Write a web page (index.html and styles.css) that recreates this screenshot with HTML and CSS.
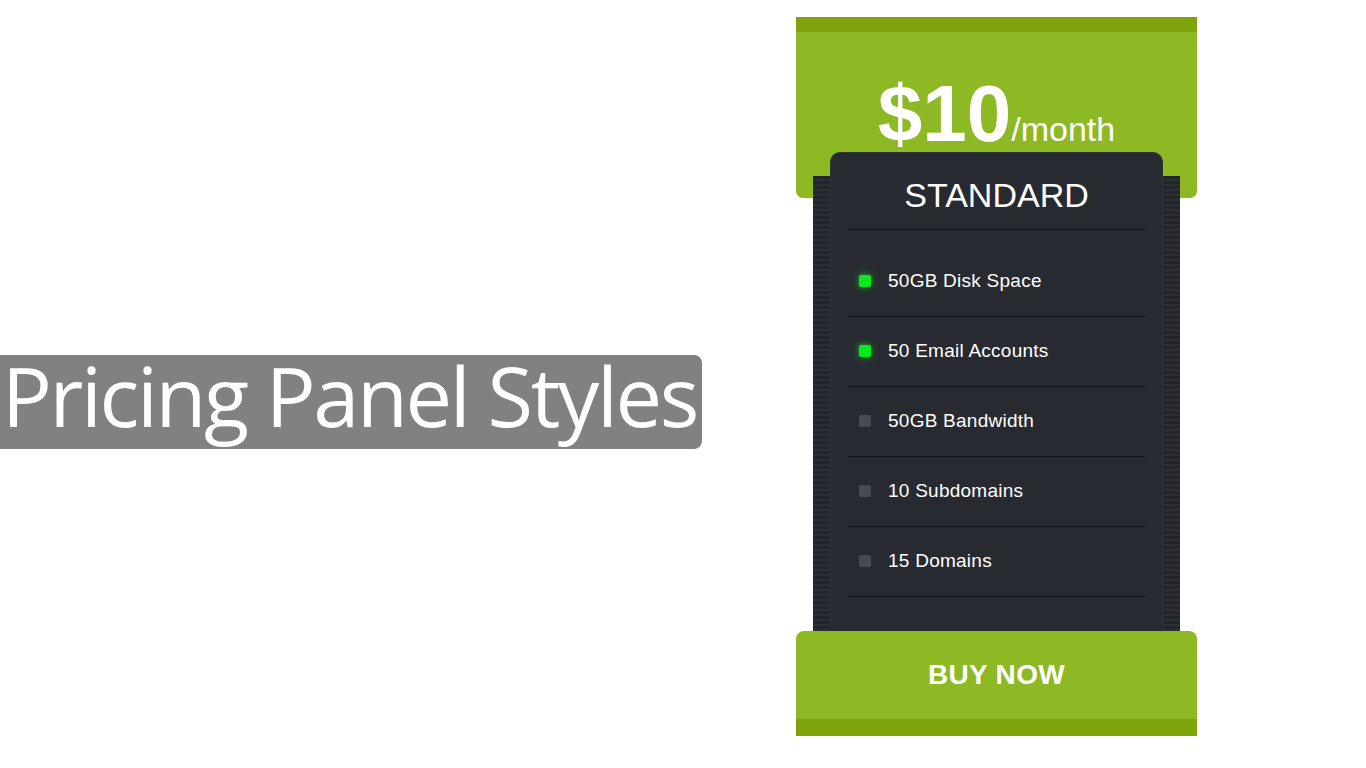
FILE: index.html
```html
<!DOCTYPE html>
<html>
<head>
<meta charset="utf-8">
<link rel="stylesheet" href="styles.css">
</head>
<body>
<div class="page">
  <div class="title-wrap">
    <h1 class="title"><span class="title-text">Pricing Panel Styles</span></h1>
  </div>
  <div class="panel">
    <div class="head">
      <div class="price"><span class="amount">$10</span><span class="per">/month</span></div>
    </div>
    <div class="body">
      <div class="card">
        <h2 class="plan">STANDARD</h2>
        <ul class="features">
          <li class="feature"><span class="dot on"></span>50GB Disk Space</li>
          <li class="feature"><span class="dot on"></span>50 Email Accounts</li>
          <li class="feature"><span class="dot"></span>50GB Bandwidth</li>
          <li class="feature"><span class="dot"></span>10 Subdomains</li>
          <li class="feature"><span class="dot"></span>15 Domains</li>
        </ul>
      </div>
    </div>
    <a class="buy" href="#">BUY NOW</a>
  </div>
</div>
</body>
</html>
```
FILE: styles.css
```css
* { box-sizing: border-box; }
html, body { margin: 0; padding: 0; background: #fff; }
body { width: 1366px; height: 768px; overflow: hidden; font-family: "Liberation Sans", Arial, sans-serif; }

.page { display: flex; align-items: flex-start; }

.title-wrap { width: 702px; margin-top: 355px; }
.title {
  margin: 0;
  height: 94px;
  width: 702px;
  background: #818181;
  border-radius: 0 8px 8px 0;
  color: #fff;
  font-family: "Open Sans", "Noto Sans", sans-serif;
  font-weight: 500;
  font-size: 83px;
  line-height: 80px;
  letter-spacing: -2.4px;
  padding-left: 2px;
  white-space: nowrap;
}

.panel { width: 401px; margin-left: 94px; margin-top: 17px; display: flex; flex-direction: column; }

.head {
  height: 181px;
  background: #8db924;
  border-top: 15px solid #7fa30a;
  border-radius: 0 0 7px 7px;
  text-align: center;
  color: #fff;
  padding-top: 42px;
}
.price { line-height: 1; white-space: nowrap; }
.amount { font-size: 80px; font-weight: 700; letter-spacing: 0; }
.per { font-size: 34px; font-weight: 400; }

.body {
  margin: -22px 17px 0;
  background: repeating-linear-gradient(to bottom, #22262b 0, #22262b 3px, #2c3036 3px, #2c3036 5px);
  position: relative;
}
.card {
  margin: -23px 18px 0;
  background: #272b31;
  border-radius: 9px 9px 0 0;
  box-shadow: 0 0 0 1px #2f343b;
  padding: 0 17px 34px;
}
.plan {
  margin: 0;
  height: 77px;
  padding-top: 23px;
  text-align: center;
  font-size: 34px;
  font-weight: 400;
  line-height: 38px;
  color: #fff;
  border-bottom: 1px solid #111316;
}
.features { list-style: none; margin: 17px 0 0; padding: 0; }
.feature {
  height: 70px;
  display: flex;
  align-items: center;
  padding-left: 11px;
  border-bottom: 1px solid #111316;
  color: #fff;
  font-size: 19px;
  letter-spacing: 0.25px;
  padding-bottom: 1px;
}
.dot {
  width: 12px; height: 12px;
  border-radius: 2px;
  background: #464c55;
  margin-right: 17px;
  flex: none;
}
.dot.on { background: #0be81f; box-shadow: 0 0 7px rgba(20, 240, 40, 0.7); }

.buy {
  display: block;
  height: 105px;
  background: #8db924;
  border-bottom: 17px solid #7fa30a;
  border-radius: 8px 8px 0 0;
  color: #fff;
  text-decoration: none;
  text-align: center;
  font-size: 28px;
  font-weight: 700;
  letter-spacing: 0.3px;
  line-height: 88px;
  position: relative;
}
```
